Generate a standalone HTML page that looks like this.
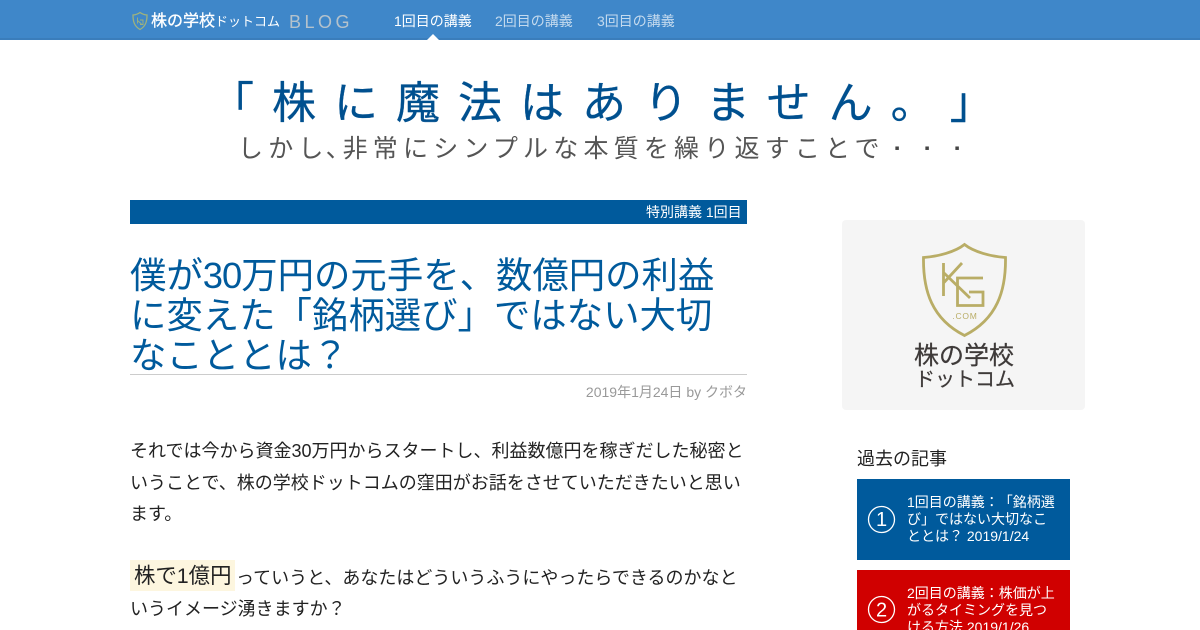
<!DOCTYPE html>
<html lang="ja"><head><meta charset="utf-8"><style>
html,body{margin:0;padding:0;width:1200px;height:630px;overflow:hidden;background:#fff}
body{position:relative;font-family:"Liberation Sans","WenQuanYi Zen Hei",sans-serif;color:#222;text-spacing-trim:space-all}
.a{position:absolute;white-space:nowrap}
.d{position:absolute;top:133px;font-family:"IPAGothic",sans-serif;font-size:26px;line-height:32px;color:#444}
</style></head><body>
<div class="a" style="left:0;top:0;width:1200px;height:40px;background:#3f87c9;box-shadow:inset 0 -2px 0 #3a7dbb"></div>
<svg class="a" style="left:131px;top:11px" width="18" height="20" viewBox="0 0 18 20"><path d="M9 1.500C7 3 4.500 3.800 2 4c0 6 1 11 7 14.500C15 15 16 10 16 4c-2.500-.2-5-1-7-2.500z" fill="none" stroke="#9fb27c" stroke-width="1.300"/><path d="M6.500 6.500v6M6.500 9.500l4 3.500M9 9h3v4.500H9" fill="none" stroke="#9fb27c" stroke-width=".9"/></svg>
<div class="a" style="left:151px;top:14px;font-size:16px;line-height:16px;color:#fff;-webkit-text-stroke:.3px #fff">株の学校<span style="font-size:13px;-webkit-text-stroke:0">ドットコム</span></div>
<div class="a" style="left:289px;top:12px;font-size:18px;line-height:20px;letter-spacing:3.500px;color:#b4c2cc">BLOG</div>
<div class="a" style="left:394px;top:13px;font-size:14px;line-height:17px;color:#fff">1回目の講義</div>
<div class="a" style="left:495px;top:13px;font-size:14px;line-height:17px;color:#c4daee">2回目の講義</div>
<div class="a" style="left:597px;top:13px;font-size:14px;line-height:17px;color:#c4daee">3回目の講義</div>
<div class="a" style="left:427px;top:34px;width:0;height:0;border-left:6px solid transparent;border-right:6px solid transparent;border-bottom:6px solid #fff"></div>

<div class="a" style="left:210px;top:76px;font-size:44px;line-height:56px;letter-spacing:18px;color:#00508f;-webkit-text-stroke:.3px #00508f">「株に魔法はありません。<span style="margin-left:-3px">」</span></div>
<div class="a" style="left:238px;top:133px;font-size:25px;line-height:32px;letter-spacing:5.200px;color:#555">しかし<span style="display:inline-block;width:17px;margin-left:-3px;overflow:hidden;vertical-align:top;letter-spacing:0">、</span>非常にシンプルな本質を繰り返すことで</div>
<div class="d" style="left:884px">・</div><div class="d" style="left:914px">・</div><div class="d" style="left:944px">・</div>

<div class="a" style="left:130px;top:200px;width:617px;height:24px;background:#005a9c"></div>
<div class="a" style="left:646px;top:204px;font-size:14px;line-height:17px;color:#fff">特別講義 1回目</div>
<div class="a" style="left:130px;top:256px;font-size:36.400px;line-height:40px;color:#005a9c">僕が<span style="letter-spacing:-1px">30</span>万円の元手を、数億円の利益<br>に変えた「銘柄選び」ではない大切<br>なこととは？</div>
<div class="a" style="left:130px;top:374px;width:617px;height:1px;background:#ccc"></div>
<div class="a" style="right:453px;top:384px;font-size:14px;line-height:17px;color:#999">2019年1月24日 by クボタ</div>

<div class="a" style="left:130px;top:436px;font-size:18px;line-height:31.500px;color:#222">それでは今から資金30万円からスタートし、利益数億円を稼ぎだした秘密と<br>いうことで、株の学校ドットコムの窪田がお話をさせていただきたいと思い<br>ます。</div>
<div class="a" style="left:130px;top:560px;width:105px;height:31px;background:#fdf6df"></div>
<div class="a" style="left:134px;top:561px;font-size:21.400px;line-height:31px;color:#222">株で1億円</div>
<div class="a" style="left:236px;top:563px;font-size:18px;line-height:31px;color:#222">っていうと、あなたはどういうふうにやったらできるのかなと</div>
<div class="a" style="left:130px;top:594px;font-size:18px;line-height:31px;color:#222">いうイメージ湧きますか？</div>

<div class="a" style="left:842px;top:220px;width:243px;height:190px;background:#f5f5f5;border-radius:4px"></div>
<svg class="a" style="left:920px;top:241px" width="90" height="98" viewBox="0 0 90 98">
<path d="M44.500 3.500C35 11 18 15.500 3.500 16.500 3 50 12 78 44.500 94.500 77 78 86 50 85.500 16.500 71 15.500 54 11 44.500 3.500z" fill="none" stroke="#b9ad66" stroke-width="2.800"/>
<path d="M23.500 22v33M23.500 42L42 22M24 32L50 57" fill="none" stroke="#b9ad66" stroke-width="2.800"/>
<path d="M63 37H37.500v27.500H63V51H49" fill="none" stroke="#b9ad66" stroke-width="2.800"/>
<text x="45" y="78" text-anchor="middle" font-family="Liberation Sans" font-size="8.500" letter-spacing=".8" fill="#b9ad66">.COM</text>
</svg>
<div class="a" style="left:914px;top:343px;font-size:25px;line-height:26px;color:#3e3a39;-webkit-text-stroke:.25px #3e3a39">株の学校</div>
<div class="a" style="left:915px;top:367px;font-size:20px;line-height:26px;color:#3e3a39;-webkit-text-stroke:.25px #3e3a39">ドットコム</div>

<div class="a" style="left:857px;top:447px;line-height:24px;color:#222;font-size:18px">過去の記事</div>
<div class="a" style="left:857px;top:479px;width:213px;height:81px;background:#005a9c"></div>
<div class="a" style="left:857px;top:570px;width:213px;height:60px;background:#d00000"></div>
<svg class="a" style="left:867px;top:505px" width="30" height="30"><circle cx="14.500" cy="14.500" r="13" fill="none" stroke="#fff" stroke-width="1.300"/><text x="14.500" y="21" text-anchor="middle" font-family="Liberation Sans" font-size="20" fill="#fff">1</text></svg>
<svg class="a" style="left:867px;top:595px" width="30" height="30"><circle cx="14.500" cy="14.500" r="13" fill="none" stroke="#fff" stroke-width="1.300"/><text x="14.500" y="21.500" text-anchor="middle" font-family="Liberation Sans" font-size="20" fill="#fff">2</text></svg>
<div class="a" style="left:907px;top:494px;font-size:14px;line-height:17px;color:#fff">1回目の講義：「銘柄選<br>び」ではない大切なこ<br>ととは？ 2019/1/24</div>
<div class="a" style="left:907px;top:585px;font-size:14px;line-height:17px;color:#fff;height:45px;overflow:hidden">2回目の講義：株価が上<br>がるタイミングを見つ<br>ける方法 2019/1/26</div>
</body></html>
